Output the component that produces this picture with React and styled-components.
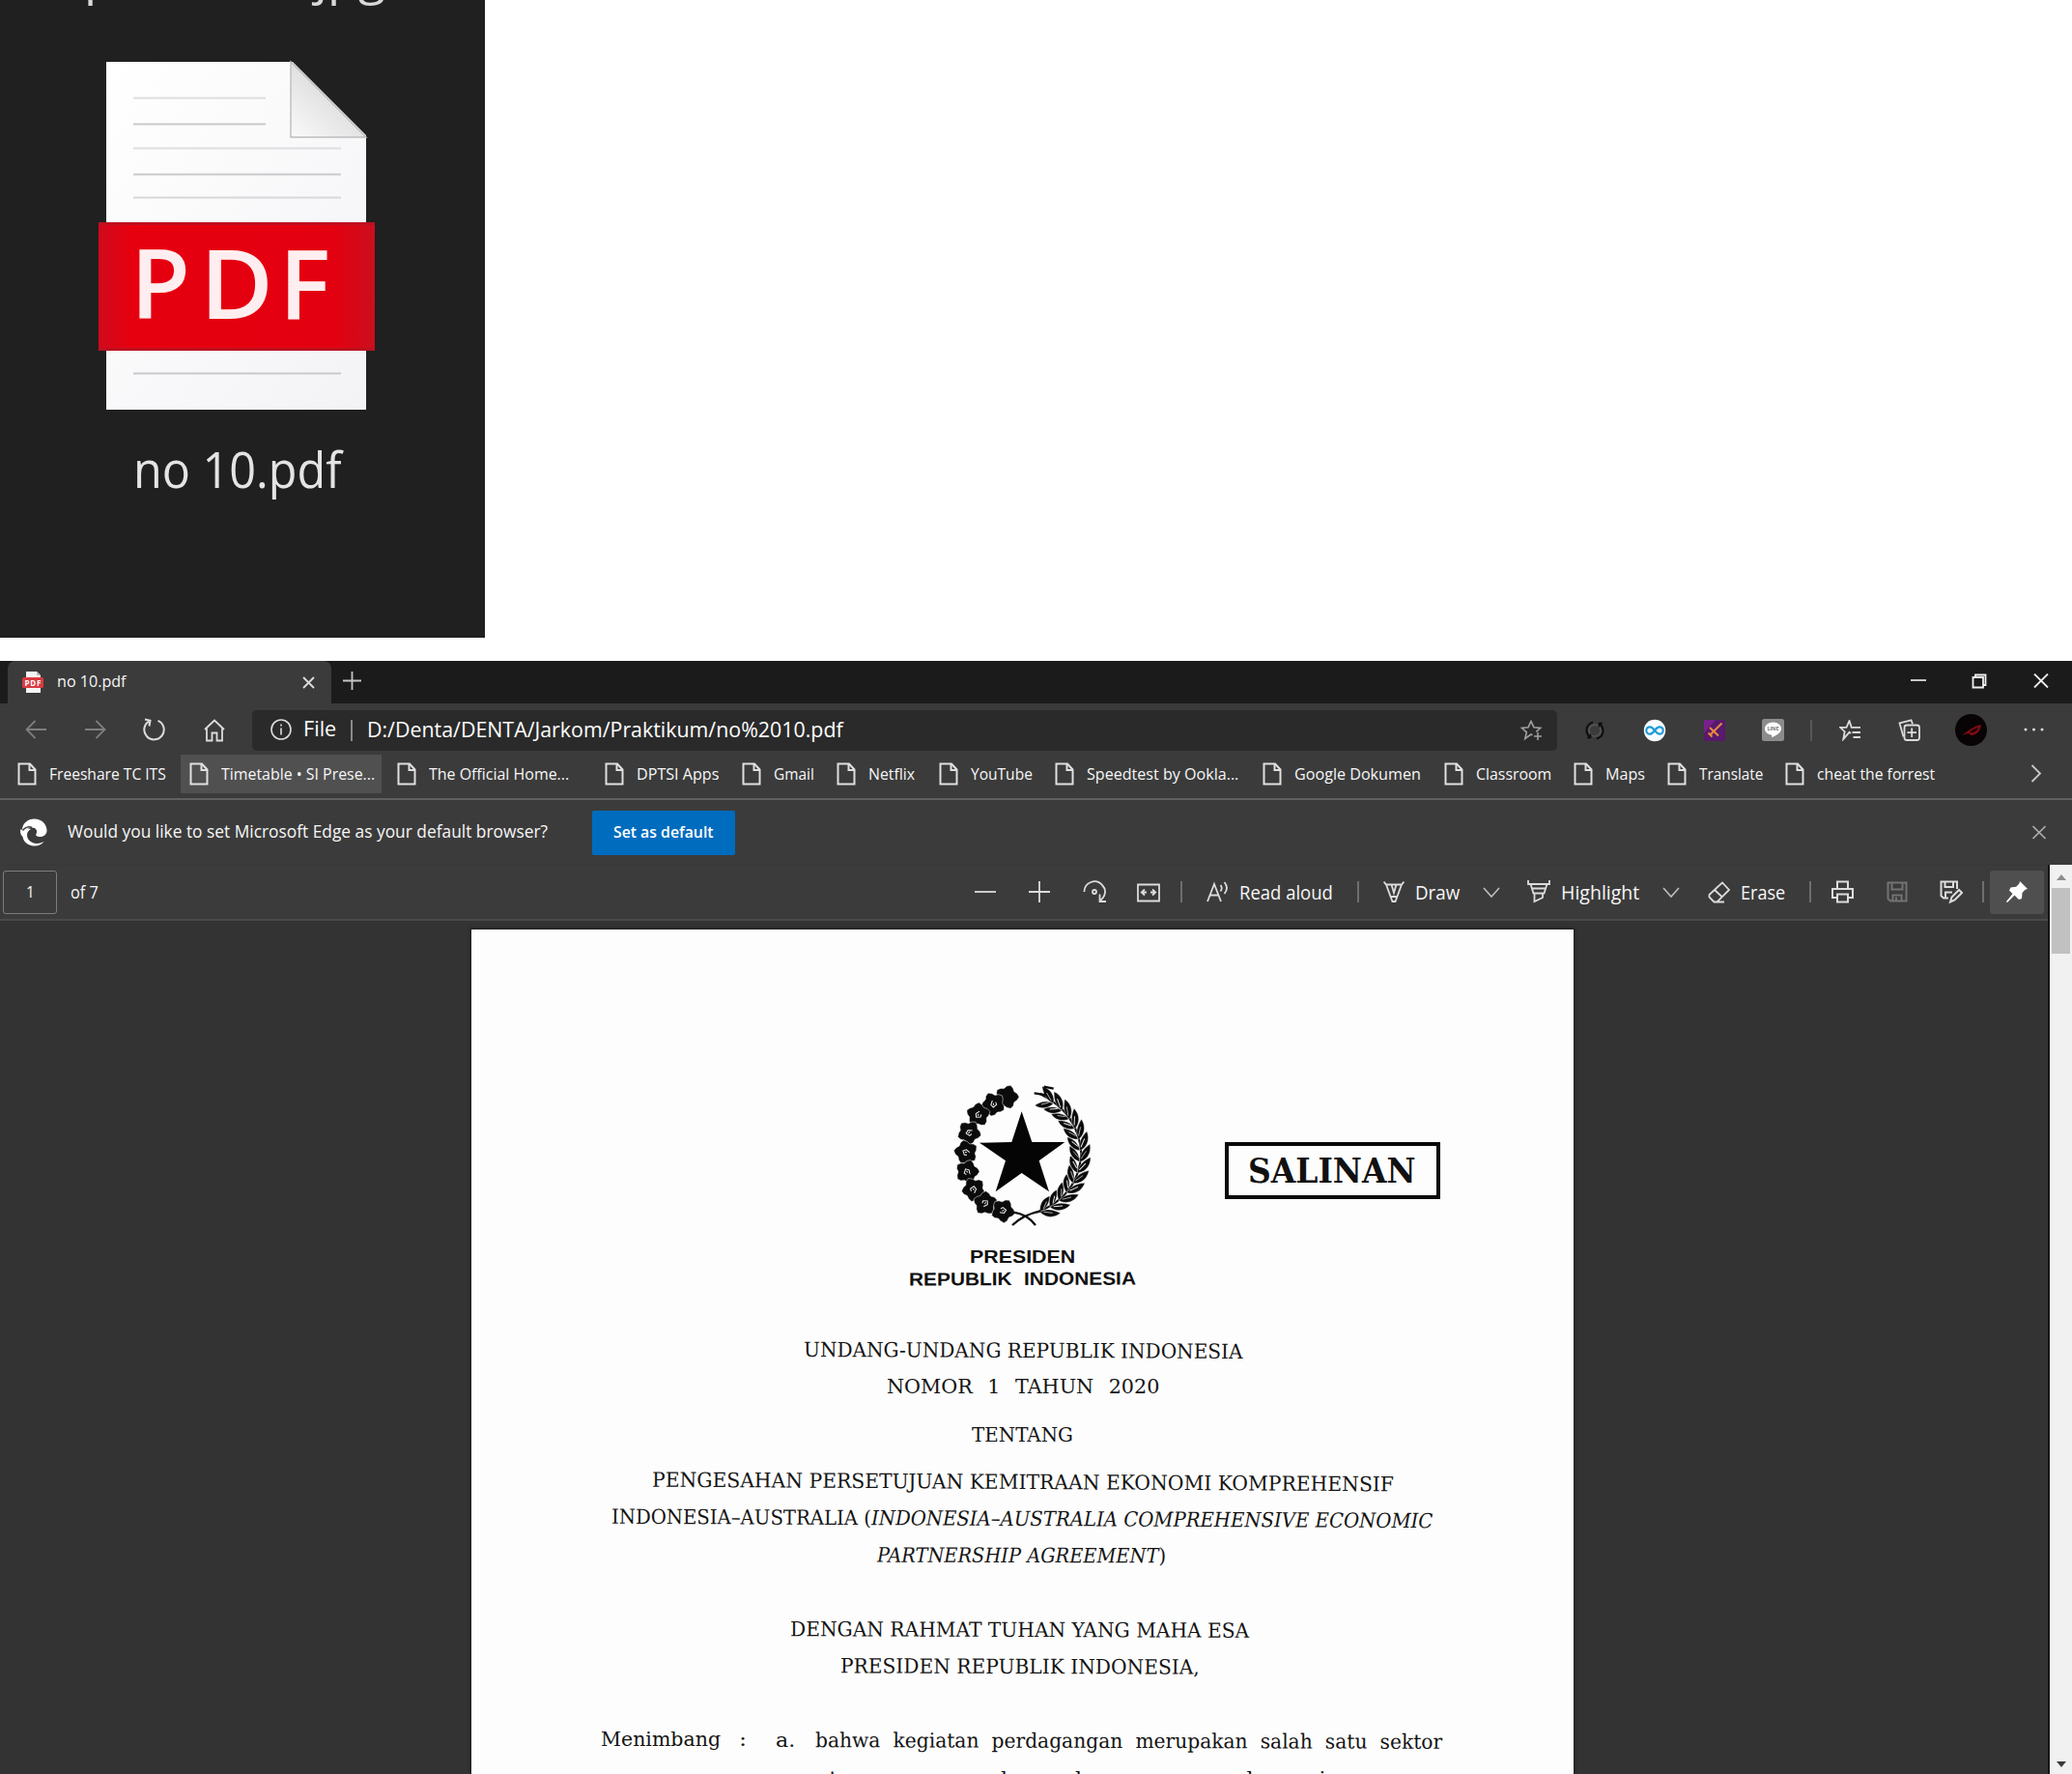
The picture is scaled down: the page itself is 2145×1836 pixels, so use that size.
import React, { useLayoutEffect, useRef, useState } from "react";
import styled, { createGlobalStyle } from "styled-components";

const UI = `"Open Sans", "Noto Sans", sans-serif`;
const SERIF = `"DejaVu Serif", "Liberation Serif", serif`;

const Global = createGlobalStyle`
  * { box-sizing: border-box; }
  html, body { margin: 0; padding: 0; background: #fff; }
  body { width: 2145px; height: 1836px; overflow: hidden; font-family: ${UI}; }
  svg { display: block; flex: none; }
`;

/* ---------- text that is condensed to a known measure ---------- */

const Measure = styled.span`
  display: block;
  flex: none;
  width: ${(p) => p.$w}px;
  margin-left: ${(p) => p.$ml || 0}px;
  margin-top: ${(p) => p.$mt || 0}px;
  font-family: ${(p) => p.$font || UI};
  font-size: ${(p) => p.$size}px;
  font-weight: ${(p) => p.$weight || 400};
  line-height: ${(p) => p.$lh || 1.4};
  color: ${(p) => p.$color || "#f6f6f6"};
  word-spacing: ${(p) => p.$ws || 0}px;
  letter-spacing: ${(p) => p.$ls || 0}px;
  white-space: nowrap;
  transform: rotate(${(p) => p.$tilt || 0}deg);
`;
const Squeeze = styled.span`
  display: inline-block;
  transform-origin: 0 50%;
`;

function Fit({ children, ...props }) {
  const ref = useRef(null);
  const [scale, setScale] = useState(1);
  useLayoutEffect(() => {
    const natural = ref.current.offsetWidth;
    if (natural) setScale(props.$w / natural);
  }, [props.$w]);
  return (
    <Measure {...props}>
      <Squeeze ref={ref} style={{ transform: `scaleX(${scale})` }}>
        {children}
      </Squeeze>
    </Measure>
  );
}

/* ---------- icons ---------- */

const Slot = styled.span`
  display: flex;
  flex: none;
  margin-left: ${(p) => p.$ml || 0}px;
  margin-top: ${(p) => p.$mt || 0}px;
`;

function Icon({ w = 22, h = 22, vb, ml, mt, color = "#dcdcdc", sw = 1.8, children }) {
  return (
    <Slot $ml={ml} $mt={mt}>
      <svg width={w} height={h} viewBox={vb || `0 0 ${w} ${h}`} fill="none" stroke={color} strokeWidth={sw}>
        {children}
      </svg>
    </Slot>
  );
}

const PageGlyph = () => (
  <Icon w={20} h={24} sw={2} color="#e0e0e0">
    <path d="M1.5 1.5h11.5l5.5 6v15h-17z" />
    <path d="M12.5 1.5v6.5h6" />
  </Icon>
);

const Chevron = ({ ml }) => (
  <Icon w={18} h={12} ml={ml} mt={2} color="#bdbdbd" sw={1.6}>
    <path d="M1 1l8 9 8-9" />
  </Icon>
);

/* ---------- file explorer ---------- */

const Explorer = styled.section`
  display: flex;
  flex-direction: column;
  width: 502px;
  height: 660px;
  background: #202020;
  overflow: hidden;
`;
const PreviousName = styled.div`
  display: flex;
  justify-content: space-between;
  width: 312px;
  height: 60px;
  margin: -56px 0 0 87px;
  font-size: 52px;
  line-height: 60px;
  color: #d8d8d8;
`;
const FileArt = styled.div`
  margin: 54px 0 0 95px;
`;
const FileLabel = styled.div`
  display: flex;
  margin: 27px 0 0 138px;
`;

const PdfFile = () => (
  <svg width="300" height="370" viewBox="95 58 300 370">
    <defs>
      <linearGradient id="sheet" x1="0" y1="0" x2="1" y2="1">
        <stop offset="0" stopColor="#ffffff" />
        <stop offset="1" stopColor="#f3f3f6" />
      </linearGradient>
      <linearGradient id="fold" x1="0" y1="1" x2="0.7" y2="0.2">
        <stop offset="0" stopColor="#fafafa" />
        <stop offset="1" stopColor="#d6d6d8" />
      </linearGradient>
      <linearGradient id="band" x1="0" y1="0" x2="1" y2="0">
        <stop offset="0" stopColor="#cf0a1c" />
        <stop offset="0.12" stopColor="#e6000f" />
        <stop offset="0.85" stopColor="#e30010" />
        <stop offset="1" stopColor="#cb0f1e" />
      </linearGradient>
    </defs>
    <path d="M110 64H303L379 140V424H110z" fill="url(#sheet)" />
    <path d="M301 64V142H379z" fill="url(#fold)" stroke="#bdbdbf" strokeWidth="1.4" />
    <g stroke="#c9c9cb" strokeWidth="2">
      <path d="M138 101.500H275" stroke="#dedee0" />
      <path d="M138 128.500H275" />
      <path d="M138 153.500H353" stroke="#dedee0" />
      <path d="M138 180.500H353" />
      <path d="M138 204.500H353" stroke="#d8d8da" />
      <path d="M138 386.500H353" />
    </g>
    <rect x="102" y="230" width="286" height="133" fill="url(#band)" />
    <path d="M102 231.500H388M102 361.500H388" stroke="#bd1020" strokeWidth="3" />
    <g fill="#ffeef0" fontFamily="Open Sans, Noto Sans, sans-serif" fontWeight="600" fontSize="100">
      <text x="135" y="330" textLength="62" lengthAdjust="spacingAndGlyphs">P</text>
      <text x="207" y="330" textLength="76" lengthAdjust="spacingAndGlyphs">D</text>
      <text x="289" y="330" textLength="53" lengthAdjust="spacingAndGlyphs">F</text>
    </g>
  </svg>
);

/* ---------- browser window ---------- */

const Browser = styled.section`
  display: flex;
  flex-direction: column;
  width: 2145px;
  height: 1152px;
  margin-top: 24px;
  background: #3b3b3b;
  overflow: hidden;
`;
const TitleBar = styled.header`
  display: flex;
  align-items: center;
  height: 44px;
  padding-left: 8px;
  background: #1b1b1b;
`;
const Tab = styled.div`
  display: flex;
  align-items: center;
  width: 335px;
  height: 44px;
  padding: 0 17px 0 15px;
  border-radius: 8px 8px 0 0;
  background: #3b3b3b;
`;
const Push = styled.span`
  flex: 1;
`;
const WindowButtons = styled.div`
  display: flex;
  align-items: center;
  padding-right: 24px;
`;
const NavBar = styled.nav`
  display: flex;
  align-items: center;
  height: 53px;
  padding: 2px 0 0 26px;
`;
const Address = styled.div`
  display: flex;
  align-items: center;
  flex: none;
  width: 1351px;
  height: 42px;
  margin-left: 28px;
  padding: 0 15px 0 19px;
  border-radius: 5px;
  background: #2a2a2a;
`;
const Rule = styled.span`
  flex: none;
  width: 2px;
  height: ${(p) => p.$h || 22}px;
  margin-left: ${(p) => p.$ml}px;
  background: ${(p) => p.$c || "#6e6e6e"};
`;
const Avatar = styled.span`
  display: flex;
  align-items: center;
  justify-content: center;
  flex: none;
  width: 33px;
  height: 33px;
  margin-left: 36px;
  border-radius: 50%;
  background: #080304;
`;
const Bookmarks = styled.div`
  display: flex;
  align-items: flex-start;
  height: 47px;
  padding-left: 9px;
  border-bottom: 2px solid #606060;
`;
const Bookmark = styled.div`
  display: flex;
  align-items: center;
  flex: none;
  width: ${(p) => p.$cell}px;
  height: 40px;
  margin-right: ${(p) => (p.$active ? 7 : 0)}px;
  padding-left: 9px;
  background: ${(p) => (p.$active ? "#505050" : "transparent")};
`;
const InfoBar = styled.div`
  display: flex;
  align-items: center;
  height: 67px;
  padding-left: 20px;
`;
const DefaultButton = styled.button`
  display: flex;
  align-items: center;
  flex: none;
  width: 148px;
  height: 46px;
  margin-left: 46px;
  padding: 0 0 0 22px;
  border: 0;
  border-radius: 2px;
  background: #006cbe;
`;
const Work = styled.div`
  display: flex;
  flex: 1;
  min-height: 0;
`;
const Reader = styled.div`
  display: flex;
  flex-direction: column;
  width: 2120px;
`;
const PdfBar = styled.div`
  display: flex;
  align-items: center;
  flex: none;
  height: 58px;
  padding: 0 0 1px 3px;
  border-top: 1px solid #373737;
  border-bottom: 2px solid #4a4a4a;
`;
const PageInput = styled.span`
  display: flex;
  align-items: center;
  justify-content: center;
  flex: none;
  width: 56px;
  height: 45px;
  border: 1.5px solid #7d7d7d;
  border-radius: 3px;
`;
const PinButton = styled.span`
  display: flex;
  align-items: center;
  justify-content: center;
  flex: none;
  width: 56px;
  height: 45px;
  margin-left: 6px;
  border-radius: 3px;
  background: #4f4f4f;
`;
const Scroll = styled.div`
  display: flex;
  flex-direction: column;
  align-items: center;
  width: 25px;
  padding: 10px 0 7px 0;
  border-left: 2px solid #151515;
  background: #f1f1f1;
`;
const Thumb = styled.span`
  width: 19px;
  height: 68px;
  margin: 8px 0 auto;
  background: #c1c1c1;
`;
const Arrow = styled.span`
  width: 0;
  height: 0;
  border: 5px solid transparent;
  border-top: ${(p) => (p.$down ? "6px solid #3a3a3a" : "0")};
  border-bottom: ${(p) => (p.$down ? "0" : "6px solid #8d8d8d")};
`;

/* ---------- document ---------- */

const Canvas = styled.div`
  display: flex;
  flex: 1;
  min-height: 0;
  padding: 9px 0 0 488px;
  background: #333;
  overflow: hidden;
`;
const Sheet = styled.article`
  display: flex;
  flex-direction: column;
  width: 1141px;
  height: 1000px;
  background: #fdfdfd;
  box-shadow: 0 0 3px 1px #1c1c1c;
`;
const Masthead = styled.div`
  display: flex;
  align-items: flex-start;
  height: 170px;
  margin: 159px 0 0 497px;
`;
const Crest = styled.div`
  padding-top: 1px;
`;
const Stamp = styled.div`
  display: flex;
  align-items: center;
  width: 223px;
  height: 59px;
  margin: 61px 0 0 138px;
  padding-left: 20px;
  border: 4px solid #0a0a0a;
`;
const Row = styled.div`
  display: flex;
  flex: none;
  height: 30px;
  margin-top: ${(p) => p.$gap}px;
  margin-left: ${(p) => p.$x - 488}px;
`;

const flowers = [
  [247, 110], [205, 132], [158, 165], [130, 220], [120, 281],
  [124, 342], [144, 397], [180, 440], [235, 463],
];
const petals = (cx, cy, turn) =>
  Array.from({ length: 20 }, (_, i) => {
    const a = (i / 20) * Math.PI * 2 + turn;
    const r = [38, 33, 28, 34][i % 4];
    return `${(cx + r * Math.cos(a)).toFixed(1)},${(cy + r * Math.sin(a)).toFixed(1)}`;
  }).join(" ");

const steps = Array.from({ length: 13 }, (_, i) => -62 + i * 10.6);

const Emblem = () => (
  <svg width="145" height="149" viewBox="75 70 435 447">
    <polygon points="293,155 325,250 427,250 347,308 378,404 293,346 212,404 243,308 162,252 262,250" fill="#050505" />
    {flowers.map(([x, y], i) => (
      <g key={i}>
        <polygon points={petals(x, y, i * 0.5)} fill="#0b0b0b" stroke="#fdfdfd" strokeWidth="1.500" />
        {i > 0 && (
          <path
            d="M-9 -7L-5 6L6 8L9 -5L2 -9M-2 -2L3 2"
            transform={`translate(${x} ${y}) rotate(${i * 37})`}
            fill="none"
            stroke="#f4f4f4"
            strokeWidth="3"
          />
        )}
      </g>
    ))}
    <path d="M350 100Q470 160 478 285Q470 420 340 468" fill="none" stroke="#0b0b0b" strokeWidth="6" />
    {steps.map((deg, i) => {
      const a = (deg * Math.PI) / 180;
      const x = 289 + 186 * Math.cos(a);
      const y = 288 + 190 * Math.sin(a);
      return (
        <g key={deg} transform={`translate(${x} ${y}) rotate(${deg})`} fill="#0b0b0b" stroke="#fdfdfd" strokeWidth="1">
          <path d="M-2 18C18 14 36 -8 29 -38C14 -26 -2 -12 -2 18z" />
          <path d="M-2 18C-24 10 -36 -6 -34 -30C-18 -22 -2 -8 -2 18z" />
          <path d="M3 8L18 -16M-6 4L-22 -14" stroke="#e4e4e4" strokeWidth={i % 2 ? 3 : 2} />
        </g>
      );
    })}
    <path d="M332 98L370 104M362 78L392 84" stroke="#0b0b0b" strokeWidth="7" />
    <path d="M268 468Q310 474 336 508M352 464Q300 474 264 508" fill="none" stroke="#0b0b0b" strokeWidth="7" />
  </svg>
);

const Text = (p) => <Fit $font={SERIF} $size={21} $lh="30px" $color="#141414" {...p} />;
const Caps = (p) => (
  <Fit $font={`"Liberation Sans", Arial, sans-serif`} $size={19} $weight={700} $lh="30px" $color="#111" {...p} />
);

/* ---------- data ---------- */

const bookmarks = [
  ["Freeshare TC ITS", 121, 178],
  ["Timetable • SI Prese...", 159, 208, true],
  ["The Official Home...", 145, 215],
  ["DPTSI Apps", 85, 142],
  ["Gmail", 42, 98],
  ["Netflix", 48, 106],
  ["YouTube", 64, 120],
  ["Speedtest by Ookla...", 157, 215],
  ["Google Dokumen", 131, 188],
  ["Classroom", 78, 134],
  ["Maps", 41, 97],
  ["Translate", 66, 122],
  ["cheat the forrest", 122, 254],
];

export default function App() {
  return (
    <>
      <Global />
      <Explorer>
        <PreviousName>
          <span>p</span>
          <span>.jpg</span>
        </PreviousName>
        <FileArt>
          <PdfFile />
        </FileArt>
        <FileLabel>
          <Fit $w={216} $size={51} $lh="60px" $color="#e4e4e4">no 10.pdf</Fit>
        </FileLabel>
      </Explorer>

      <Browser>
        <TitleBar>
          <Tab>
            <Icon w={22} h={22} color="none">
              <path d="M4 0h11l4 4v18H4z" fill="#f5f5f5" />
              <path d="M15 0l4 4h-4z" fill="#bbb" />
              <rect x="0" y="6" width="22" height="11" rx="1.500" fill="#d93a41" />
              <text x="2.500" y="14.500" fontSize="8" fontWeight="700" fontFamily="Open Sans, sans-serif" fill="#fff" textLength="17">PDF</text>
            </Icon>
            <Fit $ml={14} $mt={-2} $w={72} $size={17}>no 10.pdf</Fit>
            <Push />
            <Icon w={13} h={13}>
              <path d="M1 1l11 11M12 1L1 12" />
            </Icon>
          </Tab>
          <Icon w={19} h={19} ml={12} mt={-4} color="#c4c4c4">
            <path d="M9.500 0v19M0 9.500h19" />
          </Icon>
          <Push />
          <WindowButtons>
            <Icon w={16} h={4} mt={-5}>
              <path d="M0 2h16" />
            </Icon>
            <Icon w={16} h={16} ml={47} mt={-3} color="#f0f0f0">
              <path d="M1.500 4h10.500v10.500H1.500z" />
              <path d="M4 4V1.500h10.500V12H12" />
            </Icon>
            <Icon w={16} h={15} ml={48} mt={-3} color="#f0f0f0">
              <path d="M1 0.500l14 14M15 0.500l-14 14" />
            </Icon>
          </WindowButtons>
        </TitleBar>

        <NavBar>
          <Icon w={22} h={20} mt={-1} color="#7e7e7e">
            <path d="M22 10H1.500M10.500 1L1.500 10l9 9" />
          </Icon>
          <Icon w={22} h={20} ml={40} mt={-1} color="#7e7e7e">
            <path d="M0 10h20.500M11.500 1l9 9-9 9" />
          </Icon>
          <Icon w={25} h={24} ml={37} mt={-1} sw={2}>
            <path d="M16.500 2.800A10.200 10.200 0 1 1 7.500 3.300" />
            <path d="M3 1.500l5.500 1.200L7.500 8.500" />
          </Icon>
          <Icon w={22} h={24} ml={39}>
            <path d="M1 11L11 1.500 21 11M3 9.500V22.500h5.500v-8h5v8H19V9.500" />
          </Icon>
          <Address>
            <Icon w={22} h={22} mt={-2} sw={1.6}>
              <circle cx="11" cy="11" r="10" />
              <path d="M11 9.500v7M11 5.500v2" />
            </Icon>
            <Fit $ml={12} $mt={-1} $w={34} $size={21} $color="#fff">File</Fit>
            <Rule $ml={15} $c="#8a8a8a" />
            <Fit $ml={15} $mt={-1} $w={493} $size={21.5} $color="#fff">D:/Denta/DENTA/Jarkom/Praktikum/no%2010.pdf</Fit>
            <Push />
            <Icon w={23} h={22} color="#a0a0a0" sw={1.6}>
              <path d="M12.500 15.800L11 15 4.800 19.500 6.400 12.800 1.300 8.400l6.800-.7L11 1.500l2.900 6.200 6.800.7-4.400 3.900" />
              <path d="M18 13v8M14 17h8" />
            </Icon>
          </Address>
          <Icon w={22} h={22} ml={28} color="#0d0d0d" sw={2}>
            <path d="M9 2.500C4 4 2 8 2.600 12c.4 3 2 5 4 6.500M13 19.500c5-1.500 7-5.500 6.400-9.500-.4-3-2-5-4-6.500" />
            <circle cx="11" cy="11" r="6" stroke="#565656" strokeWidth="1.500" />
            <path d="M6.500 14.500v4H3M15.500 7.500v-4H19" strokeWidth="1.600" />
          </Icon>
          <Icon w={24} h={24} ml={39} color="none">
            <circle cx="12" cy="12" r="11.200" fill="#f6fcff" />
            <path d="M12 12C9.500 8.500 8 8.300 7 8.300a3.700 3.700 0 0 0 0 7.400c1.500 0 2.800-.7 5-3.700s3.500-3.700 5-3.700a3.700 3.700 0 0 1 0 7.400c-1.500 0-2.500-.7-5-3.700z" stroke="#1d9ad8" strokeWidth="2.200" />
          </Icon>
          <Icon w={22} h={22} ml={39} color="none">
            <rect width="22" height="22" rx="1.500" fill="#571a6c" />
            <path d="M0 0h12L0 14z" fill="#78208a" />
            <path d="M18.500 3.500L6 16" stroke="#e08a48" strokeWidth="2.200" />
            <path d="M6 8l9 8.500M4.500 13.500l4 4" stroke="#f08a3c" strokeWidth="2" />
          </Icon>
          <Icon w={23} h={23} ml={38} color="none">
            <rect width="23" height="23" rx="2.500" fill="#8c8c8c" />
            <path d="M11.500 3.500c-5 0-8.500 3-8.500 6.700 0 3.300 3 5.800 6.500 6.400.9.200.8 1 .7 2.700C14 17.500 20 14.500 20 10.200c0-3.700-3.500-6.700-8.500-6.700z" fill="#fff" />
            <text x="5.500" y="12.300" fontSize="5.500" fontWeight="700" fontFamily="Open Sans, sans-serif" fill="#777" textLength="12">LINE</text>
          </Icon>
          <Rule $ml={27} $c="#575757" />
          <Icon w={23} h={22} ml={28}>
            <path d="M12 14l-1.500-1.200L4.300 20l1.400-7.800L1 7.800h6.500L10.500 1l2.200 6.800H22M13.500 13H22M14.500 18H22" />
          </Icon>
          <Icon w={23} h={24} ml={38}>
            <path d="M5.500 18.500L1.500 4.500 13.500 1.300l1.500 4" />
            <path d="M6.500 18V9q0-2.500 2.500-2.500h10.500q2.500 0 2.500 2.500v10.500q0 2.500-2.500 2.500H9q-2.500 0-2.500-2.500zM14.200 9.500v9.500M9.500 14.200H19" />
          </Icon>
          <Avatar>
            <svg width="24" height="18" viewBox="0 0 24 18">
              <path d="M2 14C8 10 13 5 22 3c-1 6-4 10-9 11-3 0-3-2-5-2z" fill="#7d0c14" />
              <path d="M10 11c3-3 6-4 9-5-1 3-4 6-9 5z" fill="#1c0205" />
            </svg>
          </Avatar>
          <Icon w={21} h={4} ml={38} mt={-1} color="none">
            <g fill="#d8d8d8">
              <circle cx="2" cy="2" r="1.500" />
              <circle cx="10.500" cy="2" r="1.500" />
              <circle cx="19" cy="2" r="1.500" />
            </g>
          </Icon>
        </NavBar>

        <Bookmarks>
          {bookmarks.map(([name, w, cell, active]) => (
            <Bookmark key={name} $cell={cell} $active={active}>
              <PageGlyph />
              <Fit $ml={12.5} $mt={-1} $w={w} $size={16.5}>{name}</Fit>
            </Bookmark>
          ))}
          <Icon w={12} h={19} ml={9} mt={10} color="#c8c8c8">
            <path d="M1.500 1l8.500 8.500-8.500 8.500" />
          </Icon>
        </Bookmarks>

        <InfoBar>
          <Icon w={29} h={29} color="none">
            <path d="M3 12C3 5 9 0.500 15.500 0.500 23 0.500 28.500 6 28.500 12.500c0 4-3 6.500-7 6.500-3 0-5-1-4-3 1.500-3 0-6.500-4.500-6.500-5 0-9 4.500-8 10.500C1 18 .5 13 1.500 11z" fill="#fff" />
            <path d="M12 11c-4 2-5.500 8-1.500 12 4 4 10 3.500 15 1-2 3-6.500 5-11 4.500C8 28 3 23 3.500 17 4.500 12 8 10 12 11z" fill="#fff" />
            <path d="M3.500 12.500C6 9 10 8 13 9.500M11 12.500c-3 3-2.500 8 1.500 10.500 3 2 7 2 11 .5" stroke="#3b3b3b" strokeWidth="1.500" />
          </Icon>
          <Fit $ml={21} $mt={-1} $w={497} $size={18}>Would you like to set Microsoft Edge as your default browser?</Fit>
          <DefaultButton>
            <Fit $mt={-1} $w={104} $size={17} $weight={600} $color="#fff">Set as default</Fit>
          </DefaultButton>
          <Push />
          <Icon w={14} h={15} color="#aaaaaa" sw={1.6}>
            <path d="M0.500 1l13 13M13.500 1l-13 13" />
          </Icon>
          <Slot $ml={27} />
        </InfoBar>

        <Work>
          <Reader>
            <PdfBar>
              <PageInput>
                <Fit $w={9} $size={17}>1</Fit>
              </PageInput>
              <Fit $ml={14} $mt={1} $w={29} $size={18}>of 7</Fit>
              <Icon w={22} h={4} ml={907} mt={-1}>
                <path d="M0 2h22" />
              </Icon>
              <Icon w={22} h={22} ml={34} mt={-1}>
                <path d="M11 0v22M0 11h22" />
              </Icon>
              <Icon w={25} h={24} ml={34}>
                <path d="M1.500 12A10.500 10.500 0 0 1 20 5c5 5 3.500 12-2.500 16.500M17.500 14.500v7.500h6.500" />
                <circle cx="12" cy="12" r="2" />
              </Icon>
              <Icon w={24} h={20} ml={31} mt={2}>
                <path d="M1 1.500h22v17H1zM4.500 9.500h5.500M8 6.500L4.800 9.500 8 12.500M19.500 9.500H14M16 6.500l3.200 3-3.200 3" />
              </Icon>
              <Rule $ml={21} />
              <Icon w={23} h={24} ml={25}>
                <path d="M1 22L8 4l7 18M3.500 15.500h9M14.500 5q2.500 3 0 6.500M18.500 2q5 6 0 12" />
              </Icon>
              <Fit $ml={11} $mt={2} $w={97} $size={20}>Read aloud</Fit>
              <Rule $ml={25} />
              <Icon w={22} h={24} ml={25}>
                <path d="M0.500 1.500L3 4.500h16L21.500 1.500M3 4.500L9.500 22h3L19 4.500M8 17h6M8.500 4.500L11 13l2.500-8.500" />
              </Icon>
              <Fit $ml={11} $mt={2} $w={46} $size={20}>Draw</Fit>
              <Chevron ml={24} />
              <Icon w={24} h={24} ml={28}>
                <path d="M1 0v4h22V0M3.500 4l3 9.500h11l3-9.500M7.500 13.500v8.500l8.500-4v-4.500M5 8.500h14" />
              </Icon>
              <Fit $ml={11} $mt={2} $w={81} $size={20}>Highlight</Fit>
              <Chevron ml={24} />
              <Icon w={24} h={23} ml={29}>
                <path d="M1.500 14L15 1.500l7 7.500L9.500 21.500H6.500L1.500 16.500zM7 9l8 7.500M7 21.500h10" />
              </Icon>
              <Fit $ml={10} $mt={2} $w={46} $size={20}>Erase</Fit>
              <Rule $ml={25} />
              <Icon w={25} h={24} ml={20} sw={2}>
                <path d="M7 9V1.500h11V9M7 18H2V9h21v9h-5M7 14.500h11v8H7z" />
              </Icon>
              <Icon w={22} h={22} ml={33} color="#737373" sw={2}>
                <path d="M1.500 1.500h19v19H4l-2.500-2.500zM5.500 1.500v7h11v-7M6.500 20.500v-6h9v6M10 16.500v4" />
              </Icon>
              <Icon w={24} h={24} ml={33} sw={2}>
                <path d="M9 18.500H4L1.500 16V1.500H18V9M5.500 1.500V7h8.500V1.500M6 18v-5.500h7" />
                <path d="M11 22.500l1.500-5L20 10l3 3-7.500 7.500z" />
              </Icon>
              <Rule $ml={20} />
              <PinButton>
                <svg width="24" height="24" viewBox="0 0 24 24" fill="#fff">
                  <path d="M15 1l8 8-2.500.8-3 3.200-.5 6-3 1-4.500-4.500L2 23l-1.200-.8L7.500 14 4 10.500l1.500-3 5.700-.8 3.200-3.200z" />
                </svg>
              </PinButton>
            </PdfBar>

            <Canvas>
              <Sheet>
                <Masthead>
                  <Crest>
                    <Emblem />
                  </Crest>
                  <Stamp>
                    <Fit $font={SERIF} $size={35} $weight={700} $w={174} $lh="50px" $color="#111">SALINAN</Fit>
                  </Stamp>
                </Masthead>
                <Row $x={1004} $gap={-5}><Caps $w={109}>PRESIDEN</Caps></Row>
                <Row $x={941} $gap={-7}><Caps $w={235} $ws={6} $tilt={-0.25}>REPUBLIK INDONESIA</Caps></Row>
                <Row $x={832} $gap={44}><Text $w={455} $tilt={0.25}>UNDANG-UNDANG REPUBLIK INDONESIA</Text></Row>
                <Row $x={918} $gap={7}><Text $w={282} $ws={9}>NOMOR 1 TAHUN 2020</Text></Row>
                <Row $x={1006} $gap={20}><Text $w={105}>TENTANG</Text></Row>
                <Row $x={675} $gap={19}><Text $w={768} $tilt={0.35}>PENGESAHAN PERSETUJUAN KEMITRAAN EKONOMI KOMPREHENSIF</Text></Row>
                <Row $x={633} $gap={8}>
                  <Text $w={850} $tilt={0.3}>
                    INDONESIA–AUSTRALIA (<i>INDONESIA–AUSTRALIA COMPREHENSIVE ECONOMIC</i>
                  </Text>
                </Row>
                <Row $x={908} $gap={8}><Text $w={299} $tilt={0.15}><i>PARTNERSHIP AGREEMENT</i>)</Text></Row>
                <Row $x={818} $gap={47}><Text $w={475} $tilt={0.2}>DENGAN RAHMAT TUHAN YANG MAHA ESA</Text></Row>
                <Row $x={870} $gap={8}><Text $w={372} $tilt={0.2}>PRESIDEN REPUBLIK INDONESIA,</Text></Row>
                <Row $x={622} $gap={45}>
                  <Text $w={124}>Menimbang</Text>
                  <Text $ml={19} $w={8}>:</Text>
                  <Text $ml={30} $mt={1} $w={20}>a.</Text>
                  <Text $ml={21} $mt={2} $w={649} $ws={7} $tilt={0.15}>bahwa kegiatan perdagangan merupakan salah satu sektor</Text>
                </Row>
                <Row $x={844} $gap={11}>
                  <Text $w={649} $ws={8}>utama penggerak pembangunan perekonomian negara</Text>
                </Row>
              </Sheet>
            </Canvas>
          </Reader>
          <Scroll>
            <Arrow />
            <Thumb />
            <Arrow $down />
          </Scroll>
        </Work>
      </Browser>
    </>
  );
}
